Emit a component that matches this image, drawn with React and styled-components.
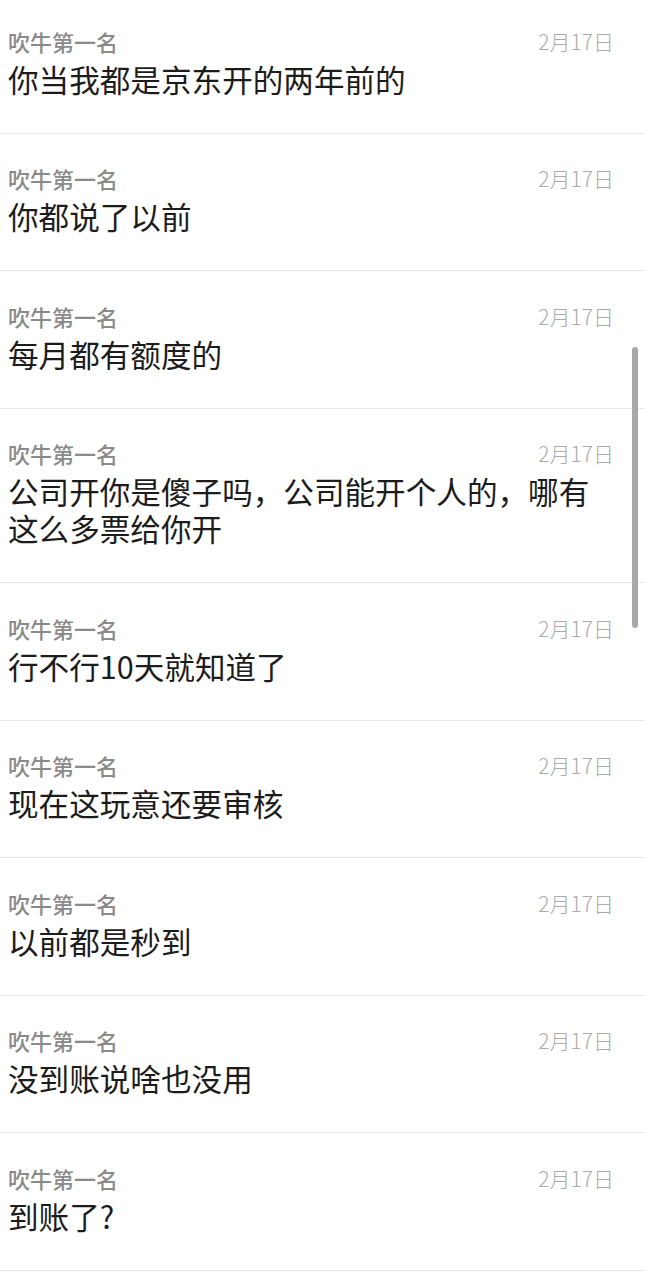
import React from 'react';
import styled, { createGlobalStyle } from 'styled-components';

const GlobalStyle = createGlobalStyle`
    html, body {
        margin: 0;
        padding: 0;
        background: #fff;
    }
    body {
        font-family: "Noto Sans CJK SC", "Noto Sans", sans-serif;
        overflow: hidden;
    }
`;

const Page = styled.div`
    position: relative;
    width: 645px;
    height: 1280px;
    overflow: hidden;
    background: #fff;
`;

const List = styled.div`
    display: flex;
    flex-direction: column;
    margin-top: -4px;
`;

const Row = styled.div`
    display: flex;
    flex-direction: column;
    padding: 29.5px 31px 35px 8px;
    border-bottom: 1px solid #e6e6e6;
`;

const Header = styled.div`
    display: flex;
    align-items: center;
    justify-content: space-between;
    height: 30px;
`;

const Name = styled.span`
    font-size: 22px;
    font-weight: 500;
    color: #8a8a8a;
    line-height: 30px;
`;

const DateText = styled.span`
    font-size: 21px;
    font-weight: 300;
    color: #ababab;
    line-height: 30px;
`;

const Message = styled.div`
    margin-top: 5px;
    font-size: 30.6px;
    line-height: 37px;
    color: #1c1c1c;
    word-break: break-all;
`;

const ScrollThumb = styled.div`
    position: absolute;
    top: 347px;
    left: 632px;
    width: 6px;
    height: 281px;
    border-radius: 3px;
    background: #a8a8a8;
`;

const messages = [
    '你当我都是京东开的两年前的',
    '你都说了以前',
    '每月都有额度的',
    '公司开你是傻子吗，公司能开个人的，哪有这么多票给你开',
    '行不行10天就知道了',
    '现在这玩意还要审核',
    '以前都是秒到',
    '没到账说啥也没用',
    '到账了?',
];

const App = () => (
    <Page>
        <GlobalStyle />
        <List>
            {messages.map((text, i) => (
                <Row key={i}>
                    <Header>
                        <Name>吹牛第一名</Name>
                        <DateText>2月17日</DateText>
                    </Header>
                    <Message>{text}</Message>
                </Row>
            ))}
        </List>
        <ScrollThumb />
    </Page>
);

export default App;
